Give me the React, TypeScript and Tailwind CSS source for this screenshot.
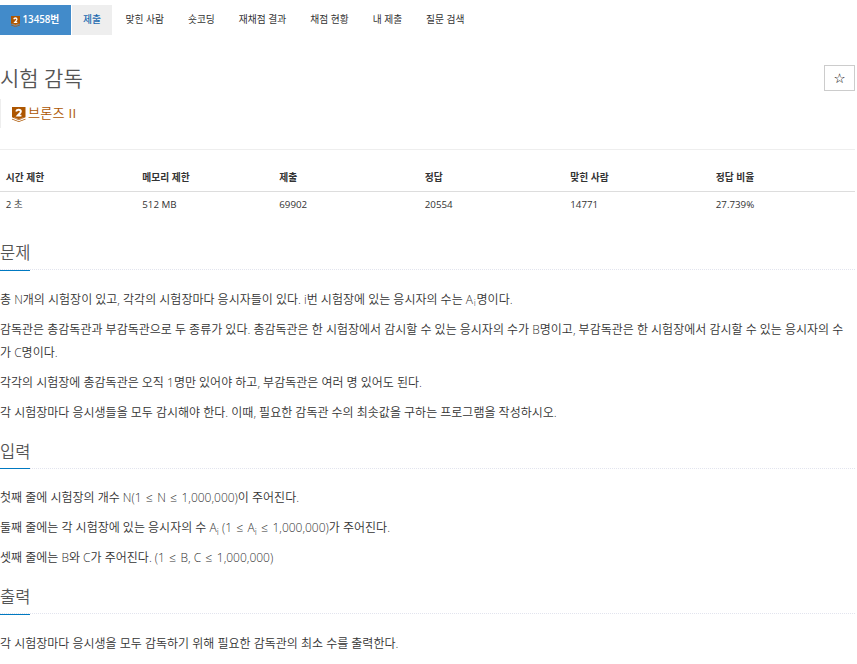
import React from 'react';
import clsx from 'clsx';

const tabs = ['맞힌 사람', '숏코딩', '재채점 결과', '채점 현황', '내 제출', '질문 검색'];

const limits = [
  { label: '시간 제한', value: '2 초', width: 'w-[136.5px]' },
  { label: '메모리 제한', value: '512 MB', width: 'w-[137px]' },
  { label: '제출', value: '69902', width: 'w-[145.5px]' },
  { label: '정답', value: '20554', width: 'w-[145.5px]' },
  { label: '맞힌 사람', value: '14771', width: 'w-[145.5px]' },
  { label: '정답 비율', value: '27.739%', width: 'w-[145px]' },
];

// Bronze II badge
const TierBadge: React.FC<{ className?: string }> = ({ className }) => (
  <svg viewBox="0 0 14 16" preserveAspectRatio="none" className={clsx('shrink-0', className)}>
    <path d="M0 0h14v11L7 14 0 11z" fill="#ad5600" />
    <path d="M0 12.4l7 2.8 7-2.8v.9L7 16l-7-2.7z" fill="#ad5600" />
    <path d="M2.2 11.4L7 13.2l4.8-1.8" fill="none" stroke="#fff" strokeWidth="0.4" />
    <path
      d="M4.3 4.8C4.7 3.4 5.7 2.9 6.9 2.9c1.5 0 2.3.8 2.3 1.9 0 1.6-1.9 2.5-3.4 4.4h4"
      fill="none"
      stroke="#fff"
      strokeWidth="2"
    />
  </svg>
);

const Leq = () => <span className="mx-[1.25px]">≤</span>;

const Section: React.FC<{ title: string; children: React.ReactNode }> = ({ title, children }) => (
  <section className="pb-[13.5px]">
    <div className="mb-[18.75px] flex h-[31px] border-b border-dotted border-[#e2e4ee]">
      <h2 className="-mb-[1.5px] h-[31.5px] border-b border-[#0079c1] text-[16.5px] leading-[27px] text-[#555]">
        {title}
      </h2>
    </div>
    <div className="space-y-[7.5px] pr-[3px] text-[12px] leading-[22.5px] font-[350] text-[#333]">{children}</div>
  </section>
);

export default function App() {
  return (
    <div className="h-[664px] overflow-hidden bg-white pr-[2px] font-['Open_Sans','Noto_Sans_CJK_KR_DemiLight','Noto_Sans_CJK_KR',sans-serif] text-[#333]">
      <ul className="flex gap-px pt-[5px] font-['Open_Sans','Noto_Sans_CJK_KR',sans-serif] text-[9.75px] leading-[30px] text-[#333]">
        <li className="flex w-[71px] items-center bg-[#428bca] pl-[11px] font-semibold text-white">
          <TierBadge className="mt-[2px] mr-[2.5px] h-[11px] w-[9px]" />
          13458번
        </li>
        <li className="mr-[0.5px] w-[40px] bg-[#eee] text-center font-medium text-[#1a69b0]">제출</li>
        {tabs.map((tab) => (
          <li key={tab} className="pr-[11px] pl-[12px]">
            {tab}
          </li>
        ))}
      </ul>

      <div className="flex h-[64px] justify-between">
        <h1 className="pt-[28px] text-[21px] leading-[30px] text-[#555]">시험 감독</h1>
        <button className="mt-[30px] h-[26px] w-[31px] border border-[#ccc] font-['DejaVu_Sans',sans-serif] text-[13.5px] leading-[22px] font-bold text-black">
          ☆
        </button>
      </div>
      <div className="flex h-[29px] items-center border-l border-[#eee] pl-[11px] text-[13.125px] tracking-[0.25px] text-[#ad5600]">
        <TierBadge className="mt-px mr-[2.5px] h-[15px] w-[13.5px]" />
        브론즈 II
      </div>

      <hr className="mt-[21px] border-[#eee]" />

      <table className="mt-[13px] w-full table-fixed text-left text-[9.75px]">
        <thead className="font-['Open_Sans','Noto_Sans_CJK_KR',sans-serif]">
          <tr className="h-[28px] border-b border-[#ddd]">
            {limits.map((limit) => (
              <th key={limit.label} className={clsx('pt-[4px] pl-[5.75px] font-bold', limit.width)}>
                {limit.label}
              </th>
            ))}
          </tr>
        </thead>
        <tbody>
          <tr className="h-[26px]">
            {limits.map((limit) => (
              <td key={limit.label} className="pt-[2px] pl-[5.75px]">
                {limit.value}
              </td>
            ))}
          </tr>
        </tbody>
      </table>

      <div className="mt-[22.4px]">
        <Section title="문제">
          <p>
            총 N개의 시험장이 있고, 각각의 시험장마다 응시자들이 있다. i번 시험장에 있는 응시자의 수는 A
            <sub className="px-[0.75px]">i</sub>
            명이다.
          </p>
          <p>
            감독관은 총감독관과 부감독관으로 두 종류가 있다. 총감독관은 한 시험장에서 감시할 수 있는 응시자의 수가
            B명이고, 부감독관은 한 시험장에서 감시할 수 있는 응시자의 수가 C명이다.
          </p>
          <p>각각의 시험장에 총감독관은 오직 1명만 있어야 하고, 부감독관은 여러 명 있어도 된다.</p>
          <p>각 시험장마다 응시생들을 모두 감시해야 한다. 이때, 필요한 감독관 수의 최솟값을 구하는 프로그램을 작성하시오.</p>
        </Section>
        <Section title="입력">
          <p>
            첫째 줄에 시험장의 개수 N(1 <Leq /> N <Leq /> 1,000,000)이 주어진다.
          </p>
          <p>
            둘째 줄에는 각 시험장에 있는 응시자의 수 A<sub>i</sub> (1 <Leq /> A<sub>i</sub> <Leq /> 1,000,000)가
            주어진다.
          </p>
          <p>
            셋째 줄에는 B와 C가 주어진다. (1 <Leq /> B, C <Leq /> 1,000,000)
          </p>
        </Section>
        <Section title="출력">
          <p>각 시험장마다 응시생을 모두 감독하기 위해 필요한 감독관의 최소 수를 출력한다.</p>
        </Section>
      </div>
    </div>
  );
}
